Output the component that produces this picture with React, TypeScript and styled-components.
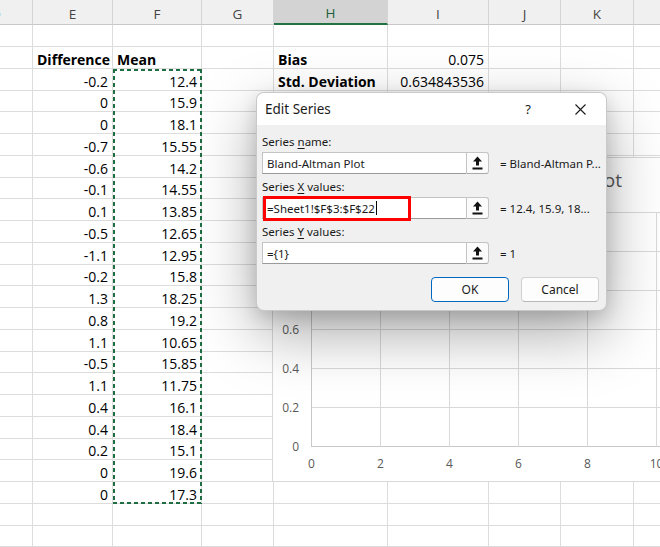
import React from "react";
import styled, { createGlobalStyle } from "styled-components";

const GlobalStyle = createGlobalStyle`
  html, body { margin: 0; padding: 0; background: #ffffff; overflow: hidden; }
  body { font-family: "Open Sans", "Liberation Sans", sans-serif; }
  * { box-sizing: border-box; }
`;

const COLS = [73, 80, 89, 72, 114, 101, 72, 73, 90];
const COL_TEMPLATE = COLS.map((w) => `${w}px`).join(" ");
const ROW_HEIGHTS = Array.from({ length: 24 }, (_, i) => (i % 4 === 3 ? 21 : 22));
const ROW_TEMPLATE = ROW_HEIGHTS.map((h) => `${h}px`).join(" ");
const HEADERS = ["D", "E", "F", "G", "H", "I", "J", "K", "L"];

const diffs = ["-0.2", "0", "0", "-0.7", "-0.6", "-0.1", "0.1", "-0.5", "-1.1", "-0.2", "1.3", "0.8", "1.1", "-0.5", "1.1", "0.4", "0.4", "0.2", "0", "0"];
const means = ["12.4", "15.9", "18.1", "15.55", "14.2", "14.55", "13.85", "12.65", "12.95", "15.8", "18.25", "19.2", "10.65", "15.85", "11.75", "16.1", "18.4", "15.1", "19.6", "17.3"];

type CellData = { text?: string; bold?: boolean; align?: "left" | "right" };

function buildRows(): CellData[][] {
  const rows: CellData[][] = [];
  for (let r = 1; r <= 24; r++) {
    const row: CellData[] = HEADERS.map(() => ({}));
    if (r === 2) {
      row[1] = { text: "Difference", bold: true, align: "left" };
      row[2] = { text: "Mean", bold: true, align: "left" };
      row[4] = { text: "Bias", bold: true, align: "left" };
      row[5] = { text: "0.075", align: "right" };
    }
    if (r >= 3 && r <= 22) {
      row[1] = { text: diffs[r - 3], align: "right" };
      row[2] = { text: means[r - 3], align: "right" };
    }
    if (r === 3) {
      row[4] = { text: "Std. Deviation", bold: true, align: "left" };
      row[5] = { text: "0.634843536", align: "right" };
    }
    rows.push(row);
  }
  return rows;
}

const Page = styled.div`
  position: relative;
  width: 660px;
  height: 547px;
  overflow: hidden;
  background: #ffffff;
`;

const Sheet = styled.div`
  display: flex;
  flex-direction: column;
  margin-left: -40px;
`;

const HeaderRow = styled.div`
  display: grid;
  grid-template-columns: ${COL_TEMPLATE};
  height: 25px;
  background: #f0f0f0;
`;

const HeaderCell = styled.div<{ $active?: boolean }>`
  display: flex;
  align-items: flex-end;
  justify-content: center;
  padding-bottom: 1px;
  font-size: 13.5px;
  line-height: 17px;
  color: ${(p) => (p.$active ? "#1b5e38" : "#444444")};
  background: ${(p) => (p.$active ? "#d3d3d3" : "transparent")};
  border-right: 1px solid #d4d4d4;
  border-bottom: ${(p) => (p.$active ? "2px solid #217346" : "1px solid #c8c8c8")};
`;

const GridBody = styled.div`
  display: grid;
  grid-template-columns: ${COL_TEMPLATE};
  grid-template-rows: ${ROW_TEMPLATE};
`;

const Cell = styled.div<{ $row: number; $col: number; $bold?: boolean; $align?: string }>`
  grid-row: ${(p) => p.$row};
  grid-column: ${(p) => p.$col};
  display: flex;
  align-items: flex-end;
  justify-content: ${(p) => (p.$align === "right" ? "flex-end" : "flex-start")};
  padding: 0 4px 0 4px;
  font-size: 14px;
  line-height: 17px;
  font-weight: ${(p) => (p.$bold ? 700 : 400)};
  color: #000000;
  white-space: nowrap;
  border-right: 1px solid #dcdcdc;
  border-bottom: 1px solid #dcdcdc;
`;

const Selection = styled.div`
  grid-row: 3 / 23;
  grid-column: 3;
  z-index: 1;
  pointer-events: none;
  background:
    repeating-linear-gradient(to right, #1f6e43 0 4px, transparent 4px 7px) top left / 100% 2px no-repeat,
    repeating-linear-gradient(to right, #1f6e43 0 4px, transparent 4px 7px) bottom left / 100% 2px no-repeat,
    repeating-linear-gradient(to bottom, #1f6e43 0 4px, transparent 4px 7px) top left / 2px 100% no-repeat,
    repeating-linear-gradient(to bottom, #1f6e43 0 4px, transparent 4px 7px) top right / 2px 100% no-repeat;
`;

/* ---------- Chart ---------- */

const ChartFrame = styled.div`
  position: absolute;
  left: 272px;
  top: 157px;
  width: 420px;
  height: 325px;
  background: #ffffff;
  border: 1px solid #d9d9d9;
  z-index: 2;
`;

const ChartSvg = styled.svg`
  display: block;
  font-family: "Open Sans", "Liberation Sans", sans-serif;
`;

const X0 = 38;
const XSTEP = 69;
const Y0 = 288;
const YSTEP = 39;

function Chart() {
  const xs = [0, 1, 2, 3, 4, 5];
  const ys = [0, 1, 2, 3, 4, 5, 6];
  return (
    <ChartFrame>
      <ChartSvg width={418} height={323} viewBox="0 0 418 323">
        <text x={349} y={29} textAnchor="end" fontSize={19} fill="#595959">
          Bland-Altman Plot
        </text>
        {ys.map((k) => (
          <line key={"h" + k} x1={X0} x2={418} y1={Y0 - k * YSTEP + 0.5} y2={Y0 - k * YSTEP + 0.5} stroke={k === 0 ? "#c8c8c8" : "#d9d9d9"} strokeWidth={1} />
        ))}
        {xs.map((k) => (
          <line key={"v" + k} x1={X0 + k * XSTEP + 0.5} x2={X0 + k * XSTEP + 0.5} y1={Y0 - 6 * YSTEP} y2={Y0 + 1} stroke={k === 0 ? "#c8c8c8" : "#d9d9d9"} strokeWidth={1} />
        ))}
        {ys.map((k) => (
          <text key={"yl" + k} x={26} y={Y0 - k * YSTEP + 5} textAnchor="end" fontSize={12} fill="#595959">
            {k === 0 ? "0" : (k * 0.2).toFixed(1)}
          </text>
        ))}
        {xs.map((k) => (
          <text key={"xl" + k} x={X0 + k * XSTEP + 0.5} y={310} textAnchor="middle" fontSize={12} fill="#595959">
            {k * 2}
          </text>
        ))}
      </ChartSvg>
    </ChartFrame>
  );
}

/* ---------- Dialog ---------- */

const Dialog = styled.div`
  position: absolute;
  left: 256px;
  top: 92px;
  width: 351px;
  height: 219px;
  z-index: 3;
  display: flex;
  flex-direction: column;
  background: #f0f0f0;
  border: 1px solid rgba(0, 0, 0, 0.16);
  border-radius: 8px;
  overflow: hidden;
  box-shadow: 0 22px 60px rgba(0, 0, 0, 0.34), 0 6px 18px rgba(0, 0, 0, 0.14);
  font-family: "Noto Sans", "Open Sans", sans-serif;
  color: #1a1a1a;
`;

const TitleBar = styled.div`
  display: flex;
  align-items: center;
  height: 32px;
  background: #ffffff;
  padding-left: 8px;
`;

const TitleText = styled.div`
  font-size: 13.5px;
  flex: 1;
`;

const TitleButton = styled.div`
  width: 52px;
  height: 32px;
  display: flex;
  align-items: center;
  justify-content: center;
  font-size: 13px;
  color: #1a1a1a;
`;

const Body = styled.div`
  display: flex;
  flex-direction: column;
  padding: 8px 6px 0 5px;
`;

const Label = styled.div`
  font-size: 11.5px;
  line-height: 18px;
  margin-bottom: 1px;
`;

const Mnemonic = styled.span`
  text-decoration: underline;
  text-underline-offset: 2px;
`;

const FieldRow = styled.div`
  display: grid;
  grid-template-columns: 227px 1fr;
  column-gap: 11px;
  align-items: center;
  margin-bottom: 4px;
`;

const InputWrap = styled.div`
  position: relative;
  display: flex;
  height: 22px;
`;

const TextBox = styled.div`
  flex: 1;
  display: flex;
  align-items: center;
  padding-left: 4px;
  background: #ffffff;
  border: 1px solid #c4c4c4;
  border-right: none;
  border-bottom-color: #9a9a9a;
  font-size: 11.5px;
  white-space: nowrap;
`;

const Caret = styled.span`
  display: inline-block;
  width: 1px;
  height: 14px;
  margin-left: 1px;
  background: #000000;
`;

const RefButton = styled.div`
  width: 23px;
  display: flex;
  align-items: center;
  justify-content: center;
  background: #fbfbfb;
  border: 1px solid #c4c4c4;
  border-bottom-color: #a8a8a8;
  border-radius: 0 3px 3px 0;
`;

const Highlight = styled.div`
  position: absolute;
  left: 1px;
  top: -1px;
  width: 148px;
  height: 25px;
  border: 3px solid #ff0000;
  pointer-events: none;
`;

const Preview = styled.div`
  font-size: 11.5px;
  white-space: nowrap;
`;

const ButtonRow = styled.div`
  display: flex;
  justify-content: flex-end;
  gap: 12px;
  margin-top: 9px;
  padding-right: 1px;
`;

const DialogButton = styled.div<{ $primary?: boolean }>`
  width: 78px;
  height: 25px;
  display: flex;
  align-items: center;
  justify-content: center;
  font-size: 12px;
  background: #fdfdfd;
  border: 1px solid ${(p) => (p.$primary ? "#0067c0" : "#d0d0d0")};
  border-bottom-color: ${(p) => (p.$primary ? "#0067c0" : "#b8b8b8")};
  border-radius: 4px;
`;

function CollapseIcon() {
  return (
    <svg width="11" height="14" viewBox="0 0 11 14">
      <polygon points="5.5,0.5 10,5.5 7,5.5 7,9.5 4,9.5 4,5.5 1,5.5" fill="#111111" />
      <rect x="0.5" y="11.5" width="10" height="2" fill="#111111" />
    </svg>
  );
}

function CloseIcon() {
  return (
    <svg width="11" height="11" viewBox="0 0 11 11">
      <path d="M0.5 0.5 L10.5 10.5 M10.5 0.5 L0.5 10.5" stroke="#1a1a1a" strokeWidth="1.1" fill="none" />
    </svg>
  );
}

function EditSeriesDialog() {
  return (
    <Dialog>
      <TitleBar>
        <TitleText>Edit Series</TitleText>
        <TitleButton>?</TitleButton>
        <TitleButton>
          <CloseIcon />
        </TitleButton>
      </TitleBar>
      <Body>
        <Label>
          Series <Mnemonic>n</Mnemonic>ame:
        </Label>
        <FieldRow>
          <InputWrap>
            <TextBox>Bland-Altman Plot</TextBox>
            <RefButton>
              <CollapseIcon />
            </RefButton>
          </InputWrap>
          <Preview>= Bland-Altman P...</Preview>
        </FieldRow>
        <Label>
          Series <Mnemonic>X</Mnemonic> values:
        </Label>
        <FieldRow>
          <InputWrap>
            <TextBox>
              =Sheet1!$F$3:$F$22
              <Caret />
            </TextBox>
            <RefButton>
              <CollapseIcon />
            </RefButton>
            <Highlight />
          </InputWrap>
          <Preview>= 12.4, 15.9, 18...</Preview>
        </FieldRow>
        <Label>
          Series <Mnemonic>Y</Mnemonic> values:
        </Label>
        <FieldRow>
          <InputWrap>
            <TextBox>={"{1}"}</TextBox>
            <RefButton>
              <CollapseIcon />
            </RefButton>
          </InputWrap>
          <Preview>= 1</Preview>
        </FieldRow>
        <ButtonRow>
          <DialogButton $primary>OK</DialogButton>
          <DialogButton>Cancel</DialogButton>
        </ButtonRow>
      </Body>
    </Dialog>
  );
}

export default function App() {
  const rows = buildRows();
  return (
    <>
      <GlobalStyle />
      <Page>
        <Sheet>
          <HeaderRow>
            {HEADERS.map((h) => (
              <HeaderCell key={h} $active={h === "H"}>
                {h}
              </HeaderCell>
            ))}
          </HeaderRow>
          <GridBody>
            {rows.map((row, ri) =>
              row.map((c, ci) => (
                <Cell key={`${ri}-${ci}`} $row={ri + 1} $col={ci + 1} $bold={c.bold} $align={c.align}>
                  {c.text}
                </Cell>
              ))
            )}
            <Selection />
          </GridBody>
        </Sheet>
        <Chart />
        <EditSeriesDialog />
      </Page>
    </>
  );
}
